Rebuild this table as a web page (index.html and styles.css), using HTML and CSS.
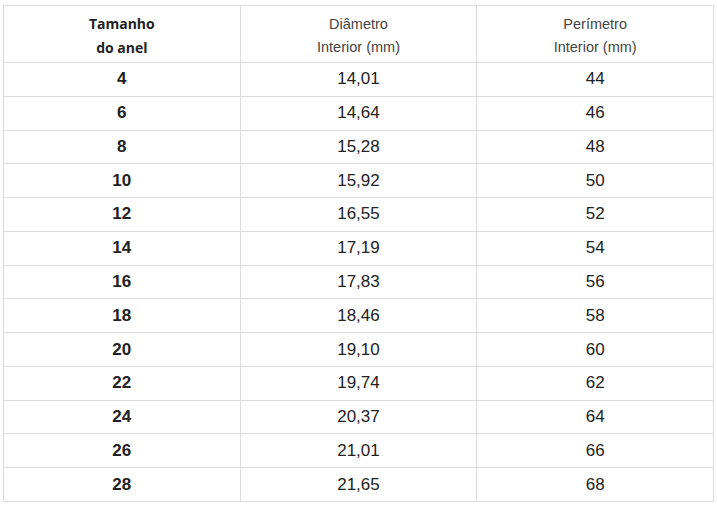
FILE: index.html
```html
<!DOCTYPE html>
<html lang="pt">
<head>
<meta charset="utf-8">
<title>Tabela de medidas de anel</title>
<link rel="stylesheet" href="styles.css">
</head>
<body>
<table class="sizes">
  <thead>
    <tr class="head-row">
      <th class="col-size">Tamanho<br>do anel</th>
      <th class="col-num">Diâmetro<br>Interior (mm)</th>
      <th class="col-num">Perímetro<br>Interior (mm)</th>
    </tr>
  </thead>
  <tbody>
    <tr><td class="size">4</td><td>14,01</td><td>44</td></tr>
    <tr><td class="size">6</td><td>14,64</td><td>46</td></tr>
    <tr><td class="size">8</td><td>15,28</td><td>48</td></tr>
    <tr><td class="size">10</td><td>15,92</td><td>50</td></tr>
    <tr><td class="size">12</td><td>16,55</td><td>52</td></tr>
    <tr><td class="size">14</td><td>17,19</td><td>54</td></tr>
    <tr><td class="size">16</td><td>17,83</td><td>56</td></tr>
    <tr><td class="size">18</td><td>18,46</td><td>58</td></tr>
    <tr><td class="size">20</td><td>19,10</td><td>60</td></tr>
    <tr><td class="size">22</td><td>19,74</td><td>62</td></tr>
    <tr><td class="size">24</td><td>20,37</td><td>64</td></tr>
    <tr><td class="size">26</td><td>21,01</td><td>66</td></tr>
    <tr><td class="size">28</td><td>21,65</td><td>68</td></tr>
  </tbody>
</table>
</body>
</html>
```
FILE: styles.css
```css
html, body {
  margin: 0;
  padding: 0;
  background: #fff;
}
body {
  padding: 5px 3px 0 3px;
}
.sizes {
  width: 711px;
  border-collapse: collapse;
  table-layout: fixed;
  font-family: "Liberation Sans", Arial, sans-serif;
  color: #222;
}
.sizes th,
.sizes td {
  border: 1px solid #dcdcdc;
  text-align: center;
  vertical-align: middle;
  padding: 0;
}
.head-row th {
  height: 52px;
  padding-top: 4px;
}
.col-size {
  font-family: "Open Sans", sans-serif;
  font-weight: 700;
  font-size: 14px;
  line-height: 24px;
  color: #222;
}
.col-num {
  font-weight: 400;
  font-size: 14.5px;
  line-height: 23px;
  color: #444;
}
.sizes tbody tr {
  height: 33.77px;
}
.sizes td {
  font-size: 17px;
  color: #222;
}
.sizes td.size {
  font-weight: 700;
}
```
